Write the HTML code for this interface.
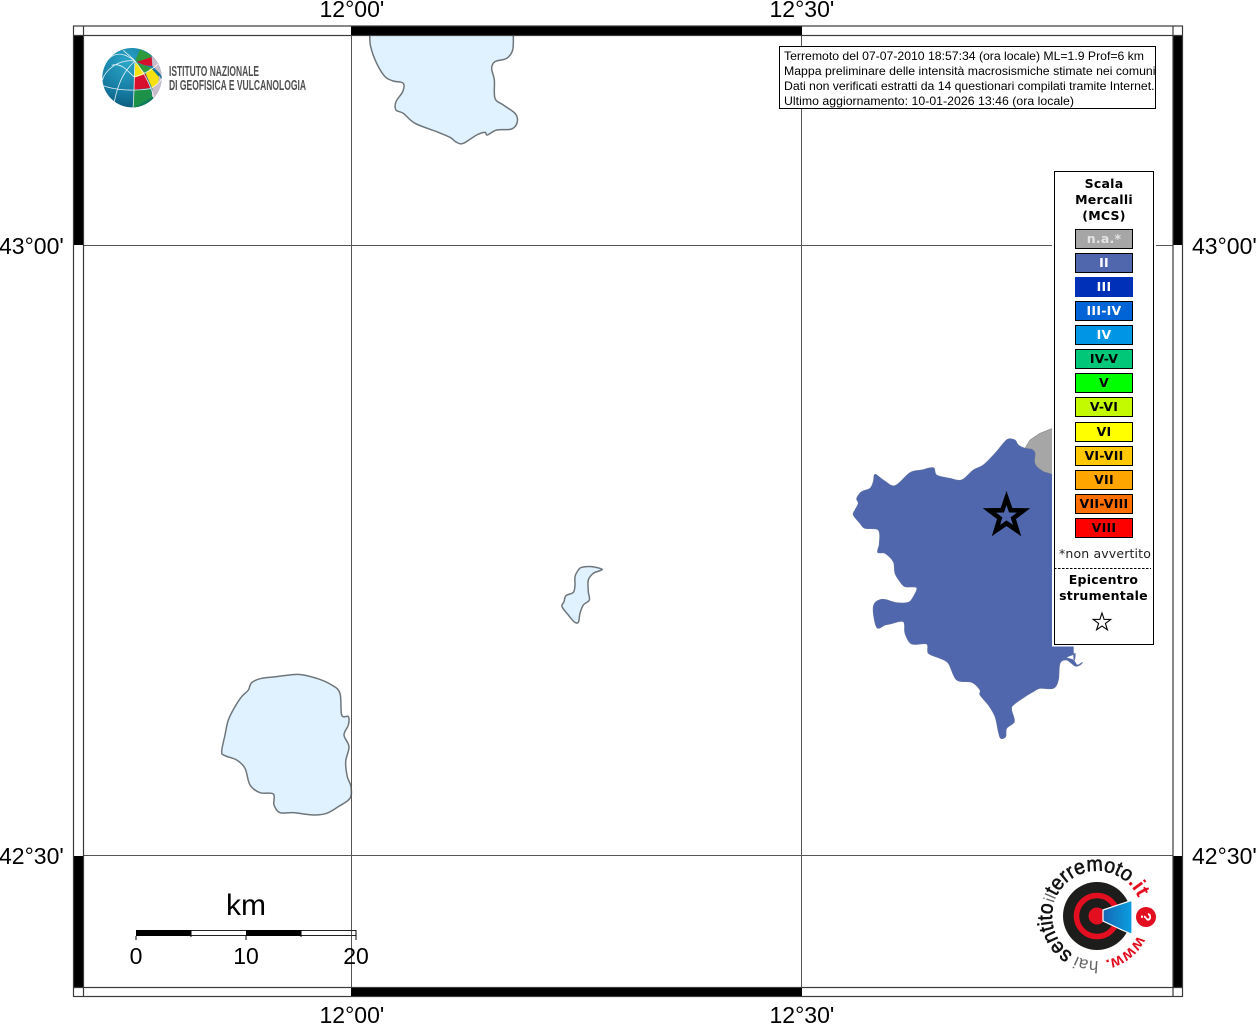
<!DOCTYPE html>
<html><head><meta charset="utf-8"><style>
html,body{margin:0;padding:0;background:#fff;width:1256px;height:1024px;overflow:hidden}
svg{display:block}
.t{font-family:"Liberation Sans",sans-serif;font-size:23px;fill:#000}
.i{font-family:"Liberation Sans",sans-serif;font-size:12.27px;fill:#000}
.l{font-family:"DejaVu Sans",sans-serif;font-size:12.5px;font-weight:bold;text-anchor:middle;letter-spacing:.25px}
</style></head><body>
<svg width="1256" height="1024" viewBox="0 0 1256 1024" xmlns="http://www.w3.org/2000/svg">
<defs>
<clipPath id="g"><circle cx="111" cy="107" r="89"/></clipPath>
<radialGradient id="tg" cx=".4" cy=".25" r=".85"><stop offset="0" stop-color="#2ba6c8"/><stop offset=".6" stop-color="#14789f"/><stop offset="1" stop-color="#0c4f6c"/></radialGradient>
<linearGradient id="cone" x1="0" x2="1" y1="0" y2="0"><stop offset="0" stop-color="#1668b4"/><stop offset="1" stop-color="#0a9fe0"/></linearGradient>
<path id="circ" d="M1142 916A45 45 0 1 1 1052 916A45 45 0 1 1 1142 916"/>
</defs>
<rect width="1256" height="1024" fill="#fff"/>

<!-- lakes -->
<g transform="translate(200,660) scale(.33333)" fill="#e0f2ff" stroke="#6f767b" stroke-width="4.5" stroke-linejoin="round">
<path class="s" d="M65 275L75 225 85 180 105 140 125 110 145 90 155 68 185 55 230 50 295 43 350 55 395 75 420 100 425 165 445 170 445 195 432 225 447 260 437 305 442 350 453 380 450 415 415 440 380 460 340 465 280 458 240 458 222 435 220 402 180 398 150 375 135 325 110 300 75 287Z"/>
</g>
<g transform="translate(360,30) scale(.33333)" fill="#e0f2ff" stroke="#6f767b" stroke-width="4.5" stroke-linejoin="round">
<path class="s" d="M28 0L29 15 32 50 50 100 75 140 100 153 130 160 128 185 108 215 108 240 130 250 165 280 230 305 270 322 290 337 310 340 350 315 375 307 382 315 410 300 455 297 472 275 465 250 430 225 405 205 403 150 395 115 405 95 440 85 458 60 460 15 460 0 440 -10 240 -10 50 -10Z"/>
</g>
<g transform="translate(550,555) scale(.33333)" fill="#e0f2ff" stroke="#6f767b" stroke-width="4.5" stroke-linejoin="round">
<path class="s" d="M95 37L125 35 155 42 150 47 130 55 115 75 115 110 118 135 100 150 90 175 85 202 72 200 55 180 36 155 42 140 48 122 70 112 75 90 75 65 85 45Z"/>
</g>

<!-- region -->
<g transform="translate(840,420) scale(.33333)" stroke-width="2" stroke-linejoin="round">
<path fill="#a6a6a6" stroke="#8a8a8a" d="M555 85L570 60 600 40 650 20 650 168 640 165 610 155 590 140 583 125 585 100 575 88Z"/>
<path class="s" fill="#5067ae" stroke="#5d6f9f" d="M505 57L525 60 535 75 555 85 575 88 585 100 583 125 590 140 610 155 640 165 700 200 700 678 705 700 680 712 700 720 712 735 727 727 720 735 705 738 680 720 660 730 655 780 640 805 600 805 580 815 555 830 520 855 515 870 523 905 500 925 497 950 482 955 475 935 465 890 445 855 420 825 420 810 395 787 350 780 325 730 300 715 265 700 260 672 215 672 195 640 190 605 150 612 135 615 110 622 100 560 125 538 170 548 205 547 220 530 230 503 195 500 180 485 165 460 160 425 135 400 113 397 118 370 115 330 75 325 60 310 40 285 45 270 55 250 50 235 65 215 90 205 100 185 105 163 130 180 165 197 210 158 245 150 280 143 290 165 330 175 365 180 400 150 430 135 465 100 490 70Z"/>
</g>
<polygon points="1006.5,498 1010.7,510.2 1023.6,510.4 1013.3,518.2 1017.1,530.6 1006.5,523.2 995.9,530.6 999.7,518.2 989.4,510.4 1002.3,510.2" fill="none" stroke="#000" stroke-width="4.6" stroke-miterlimit="10"/>

<!-- grid -->
<g stroke="#555" stroke-width="1" fill="none" shape-rendering="crispEdges">
<path d="M351.5 36V988M801.5 36V988M84 245.5H1173M84 855.5H1173"/>
</g>

<!-- frame -->
<g shape-rendering="crispEdges">
<rect x="351" y="26" width="451" height="10" fill="#000"/>
<rect x="351" y="988" width="451" height="9" fill="#000"/>
<rect x="74" y="36" width="9" height="209" fill="#000"/>
<rect x="74" y="856" width="9" height="131" fill="#000"/>
<rect x="1173" y="36" width="10" height="209" fill="#000"/>
<rect x="1173" y="856" width="10" height="131" fill="#000"/>
</g>
<g fill="none" stroke="#3a3a3a" stroke-width="1.2">
<rect x="73.5" y="26" width="1109" height="970.5"/>
<rect x="83.5" y="35.5" width="1089.5" height="952"/>
<path d="M83.5 26V36M1173 26V36M83.5 987V997M1173 987V997M74 35.500H84M1173 35.500H1183M74 987.500H84M1173 987.500H1183"/>
</g>

<!-- tick labels -->
<text class="t" x="319.500" y="17">12°00'</text>
<text class="t" x="769.500" y="17">12°30'</text>
<text class="t" x="319.500" y="1023">12°00'</text>
<text class="t" x="769.500" y="1023">12°30'</text>
<text class="t" x="-1" y="254">43°00'</text>
<text class="t" x="-1" y="864">42°30'</text>
<text class="t" x="1192" y="254">43°00'</text>
<text class="t" x="1192" y="864">42°30'</text>

<!-- INGV logo -->
<g transform="translate(95,42) scale(.33333)">
<g clip-path="url(#g)">
<rect x="20" y="15" width="185" height="185" fill="url(#tg)"/>
<path d="M120 57L135 22 165 38 170 50 128 60Z" fill="#2f9a3c"/>
<path d="M125 60L170 45 172 72 150 70Z" fill="#d8102e"/>
<path d="M170 40L205 80 205 115 195 95 172 72Z" fill="#c9bccb"/>
<path d="M122 62L150 70 168 78 150 92 130 70Z" fill="#2f9a3c"/>
<path d="M120 62L130 70 150 95 125 108 118 105Z" fill="#f4e10d"/>
<path d="M168 78L192 105 190 122 172 140 152 95Z" fill="#f4e10d"/>
<path d="M118 107L152 96 165 138 118 143Z" fill="#d8102e"/>
<path d="M192 100L205 120 200 170 170 165 172 140 190 122Z" fill="#c9bccb"/>
<path d="M116 145L166 140 172 165 178 175 115 200Z" fill="#1e9148"/>
<path d="M172 165L190 170 160 200 112 200Z" fill="#0f7a5e"/>
<path d="M178 172L190 162 180 186Z" fill="#d8102e"/>
<g fill="none" stroke="#fff" stroke-width="2.5" opacity=".85">
<path d="M120 57C85 30 60 30 40 52M120 57C100 75 70 105 55 195M120 57C118 90 118 150 114 200M120 57C145 90 170 130 178 175M120 57C70 50 30 85 22 115M22 130C60 145 120 148 166 140 185 130 195 120 200 110M50 70C80 60 100 90 118 105 150 95 175 80 190 65M85 25C100 40 110 45 120 57"/>
</g>
</g>
</g>
<g font-family="'Liberation Sans',sans-serif" font-weight="bold" fill="#505050" font-size="14.5">
<text x="169" y="76" textLength="90" lengthAdjust="spacingAndGlyphs">ISTITUTO NAZIONALE</text>
<text x="169" y="90" textLength="137" lengthAdjust="spacingAndGlyphs">DI GEOFISICA E VULCANOLOGIA</text>
</g>

<!-- info box -->
<rect x="779.500" y="46.500" width="376" height="62" fill="#fff" stroke="#000" stroke-width="1" shape-rendering="crispEdges"/>
<text class="i" x="784" y="60" textLength="360">Terremoto del 07-07-2010 18:57:34 (ora locale) ML=1.9 Prof=6 km</text>
<text class="i" x="784" y="75" textLength="371.500">Mappa preliminare delle intensità macrosismiche stimate nei comuni</text>
<text class="i" x="784" y="90" textLength="370.500">Dati non verificati estratti da 14 questionari compilati tramite Internet.</text>
<text class="i" x="784" y="105" textLength="290">Ultimo aggiornamento: 10-01-2026 13:46 (ora locale)</text>

<!-- legend -->
<rect x="1052" y="169.500" width="104" height="477" fill="#fff" shape-rendering="crispEdges"/>
<rect x="1054.500" y="171.500" width="99" height="473" fill="#fff" stroke="#000" stroke-width="1" shape-rendering="crispEdges"/>
<text class="l" x="1104" y="188">Scala</text>
<text class="l" x="1104" y="204">Mercalli</text>
<text class="l" x="1104" y="220">(MCS)</text>
<g stroke="#000" stroke-width="1" shape-rendering="crispEdges">
<rect x="1075.500" y="229.500" width="57" height="19" fill="#a6a6a6"/>
<rect x="1075.500" y="253.500" width="57" height="19" fill="#5067ae"/>
<rect x="1075.500" y="277.500" width="57" height="19" fill="#0030b8" stroke="#0030b8"/>
<rect x="1075.500" y="301.500" width="57" height="19" fill="#0064d6"/>
<rect x="1075.500" y="325.500" width="57" height="19" fill="#0096e6"/>
<rect x="1075.500" y="349.500" width="57" height="19" fill="#00c878"/>
<rect x="1075.500" y="373.500" width="57" height="19" fill="#00ff00"/>
<rect x="1075.500" y="397.500" width="57" height="19" fill="#c3fa00"/>
<rect x="1075.500" y="422.500" width="57" height="19" fill="#ffff00"/>
<rect x="1075.500" y="446.500" width="57" height="19" fill="#ffc800"/>
<rect x="1075.500" y="470.500" width="57" height="19" fill="#ffa500"/>
<rect x="1075.500" y="494.500" width="57" height="19" fill="#ff6e00"/>
<rect x="1075.500" y="518.500" width="57" height="19" fill="#ff0000"/>
</g>
<g>
<text class="l" x="1104" y="243" fill="#e4e4e4">n.a.*</text>
<text class="l" x="1104" y="267" fill="#fff">II</text>
<text class="l" x="1104" y="291" fill="#fff">III</text>
<text class="l" x="1104" y="315" fill="#fff">III-IV</text>
<text class="l" x="1104" y="339" fill="#fff">IV</text>
<text class="l" x="1104" y="363">IV-V</text>
<text class="l" x="1104" y="387">V</text>
<text class="l" x="1104" y="411">V-VI</text>
<text class="l" x="1104" y="436">VI</text>
<text class="l" x="1104" y="460">VI-VII</text>
<text class="l" x="1104" y="484">VII</text>
<text class="l" x="1104" y="508">VII-VIII</text>
<text class="l" x="1104" y="532">VIII</text>
</g>
<text x="1105" y="558" font-family="'DejaVu Sans',sans-serif" font-size="12.500" text-anchor="middle" fill="#222" letter-spacing=".15">*non avvertito</text>
<path d="M1054 568.500H1151" stroke="#000" stroke-width="1" stroke-dasharray="2.500 1.500" shape-rendering="crispEdges"/>
<text class="l" x="1103.500" y="584">Epicentro</text>
<text class="l" x="1103.500" y="600">strumentale</text>
<polygon points="1102,613 1104.100,619.300 1110.800,619.400 1105.400,623.400 1107.400,629.800 1102,626 1096.600,629.800 1098.600,623.400 1093.200,619.400 1099.900,619.300" fill="#fff" stroke="#000" stroke-width="1.100"/>

<!-- scale bar -->
<g shape-rendering="crispEdges">
<rect x="136" y="930" width="55" height="6" fill="#000"/>
<rect x="246" y="930" width="55" height="6" fill="#000"/>
<path d="M191 930.500H246M301 930.500H356M191 935.500H246M301 935.500H356" stroke="#222" stroke-width="1"/>
<path d="M136 936V940M246 936V940M356 930V940" stroke="#000" stroke-width="1.200"/>
<path d="M191 930V937M301 930V937" stroke="#000" stroke-width="1"/>
</g>
<text x="246" y="915" font-family="'Liberation Sans',sans-serif" font-size="30" text-anchor="middle">km</text>
<g font-family="'Liberation Sans',sans-serif" font-size="23" text-anchor="middle">
<text x="136" y="964">0</text>
<text x="246" y="964">10</text>
<text x="356" y="964">20</text>
</g>

<!-- haisentito logo -->
<circle cx="1097" cy="916" r="34" fill="#1d1d1b"/>
<circle cx="1097" cy="916" r="20.500" fill="none" stroke="#e30f20" stroke-width="5.500"/>
<circle cx="1097" cy="916" r="8.500" fill="#e30f20"/>
<path d="M1103 910L1130 901Q1132 900 1132 903L1132 932Q1132 935 1129 933L1122 930 1103 921Z" fill="url(#cone)" stroke="#fff" stroke-width="1.200"/>
<circle cx="1146" cy="917" r="10" fill="#e30f20"/>
<text x="1146" y="922" transform="rotate(90 1146 917)" font-family="'Liberation Sans',sans-serif" font-weight="bold" font-size="15" fill="#fff" text-anchor="middle">?</text>
<g font-family="'Liberation Sans',sans-serif">
<text font-size="16.500" font-weight="bold" fill="#e30f20"><textPath href="#circ" startOffset="20">www.</textPath></text>
<text font-size="17" fill="#666"><textPath href="#circ" startOffset="69">hai</textPath></text>
<text font-size="21" fill="#111" stroke="#111" stroke-width=".6"><textPath href="#circ" startOffset="96" textLength="57" lengthAdjust="spacingAndGlyphs">sentito</textPath></text>
<text font-size="16" fill="#666"><textPath href="#circ" startOffset="154">il</textPath></text>
<text font-size="21" fill="#111" stroke="#111" stroke-width=".5"><textPath href="#circ" startOffset="161" textLength="84" lengthAdjust="spacingAndGlyphs">terremoto</textPath></text>
<text font-size="21" font-weight="bold" fill="#e30f20"><textPath href="#circ" startOffset="245">.it</textPath></text>
</g>
</svg>
<script>
document.querySelectorAll('path.s').forEach(function(p){
  var n=p.getAttribute('d').match(/-?[\d.]+/g).map(Number),a=[],i;
  for(i=0;i<n.length;i+=2)a.push([n[i],n[i+1]]);
  var L=a.length,d='M'+a[0][0]+' '+a[0][1];
  for(i=0;i<L;i++){
    var p0=a[(i-1+L)%L],p1=a[i],p2=a[(i+1)%L],p3=a[(i+2)%L];
    d+='C'+(p1[0]+(p2[0]-p0[0])/6).toFixed(1)+' '+(p1[1]+(p2[1]-p0[1])/6).toFixed(1)+' '+(p2[0]-(p3[0]-p1[0])/6).toFixed(1)+' '+(p2[1]-(p3[1]-p1[1])/6).toFixed(1)+' '+p2[0]+' '+p2[1];
  }
  p.setAttribute('d',d+'Z');
});
</script>
</body></html>
